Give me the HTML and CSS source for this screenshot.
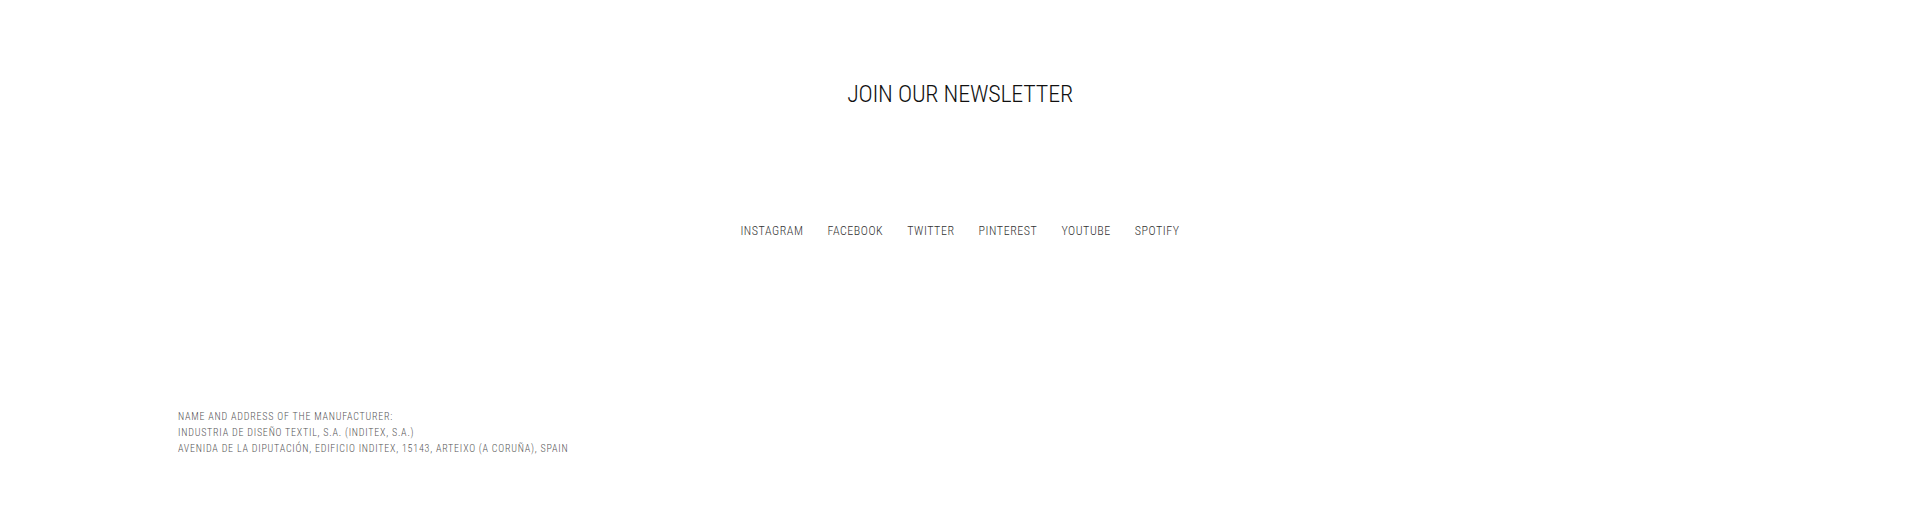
FILE: index.html
```html
<!DOCTYPE html>
<html lang="en">
<head>
<meta charset="utf-8">
<title>Footer</title>
<link rel="stylesheet" href="styles.css">
</head>
<body>
<footer class="footer">
  <section class="newsletter">
    <h2 class="newsletter-title">JOIN OUR NEWSLETTER</h2>
  </section>
  <nav class="social">
    <a class="social-link" href="#">INSTAGRAM</a>
    <a class="social-link" href="#">FACEBOOK</a>
    <a class="social-link" href="#">TWITTER</a>
    <a class="social-link" href="#">PINTEREST</a>
    <a class="social-link" href="#">YOUTUBE</a>
    <a class="social-link" href="#">SPOTIFY</a>
  </nav>
  <div class="legal">
    <p class="legal-line">NAME AND ADDRESS OF THE MANUFACTURER:</p>
    <p class="legal-line">INDUSTRIA DE DISEÑO TEXTIL, S.A. (INDITEX, S.A.)</p>
    <p class="legal-line">AVENIDA DE LA DIPUTACIÓN, EDIFICIO INDITEX, 15143, ARTEIXO (A CORUÑA), SPAIN</p>
  </div>
</footer>
</body>
</html>
```
FILE: styles.css
```css
html, body {
  margin: 0;
  padding: 0;
  background: #fff;
}
body {
  font-family: Roboto, "Liberation Sans", Arial, sans-serif;
  font-stretch: 75%;
  width: 1920px;
  height: 522px;
  overflow: hidden;
}
.footer {
  display: flex;
  flex-direction: column;
}
.newsletter {
  padding-top: 82px;
  display: flex;
  justify-content: center;
}
.newsletter-title {
  margin: 0;
  font-size: 24px;
  line-height: 24px;
  font-weight: 300;
  letter-spacing: -0.2px;
  color: #111;
}
.social {
  margin-top: 119px;
  display: flex;
  justify-content: center;
  gap: 24px;
}
.social-link {
  font-size: 12px;
  line-height: 12px;
  font-weight: 300;
  letter-spacing: 0.55px;
  color: #333;
  text-decoration: none;
}
.legal {
  margin-top: 172px;
  padding-left: 178px;
}
.legal-line {
  margin: 0;
  font-size: 10px;
  line-height: 16px;
  font-weight: 350;
  letter-spacing: 0.78px;
  color: #555;
}
```
